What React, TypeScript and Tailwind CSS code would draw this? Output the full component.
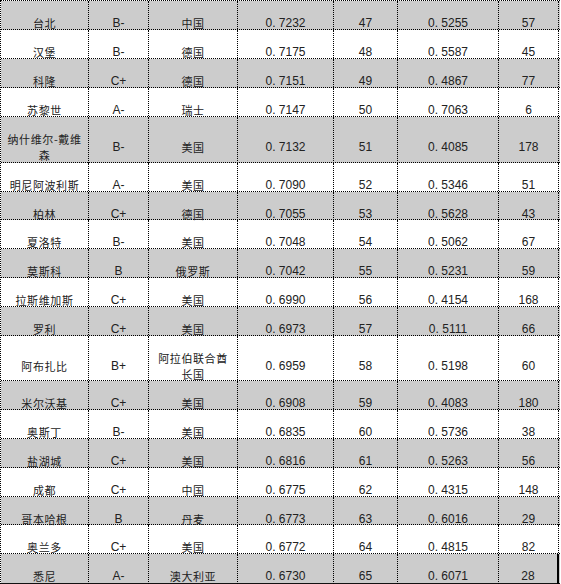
import React from "react";

type Row = [string, string, string, string, string, string, string];

const rows: Row[] = [
  ["台北", "B-", "中国", "0. 7232", "47", "0. 5255", "57"],
  ["汉堡", "B-", "德国", "0. 7175", "48", "0. 5587", "45"],
  ["科隆", "C+", "德国", "0. 7151", "49", "0. 4867", "77"],
  ["苏黎世", "A-", "瑞士", "0. 7147", "50", "0. 7063", "6"],
  ["纳什维尔-戴维\n森", "B-", "美国", "0. 7132", "51", "0. 4085", "178"],
  ["明尼阿波利斯", "A-", "美国", "0. 7090", "52", "0. 5346", "51"],
  ["柏林", "C+", "德国", "0. 7055", "53", "0. 5628", "43"],
  ["夏洛特", "B-", "美国", "0. 7048", "54", "0. 5062", "67"],
  ["莫斯科", "B", "俄罗斯", "0. 7042", "55", "0. 5231", "59"],
  ["拉斯维加斯", "C+", "美国", "0. 6990", "56", "0. 4154", "168"],
  ["罗利", "C+", "美国", "0. 6973", "57", "0. 5111", "66"],
  ["阿布扎比", "B+", "阿拉伯联合酋\n长国", "0. 6959", "58", "0. 5198", "60"],
  ["米尔沃基", "C+", "美国", "0. 6908", "59", "0. 4083", "180"],
  ["奥斯丁", "B-", "美国", "0. 6835", "60", "0. 5736", "38"],
  ["盐湖城", "C+", "美国", "0. 6816", "61", "0. 5263", "56"],
  ["成都", "C+", "中国", "0. 6775", "62", "0. 4315", "148"],
  ["哥本哈根", "B", "丹麦", "0. 6773", "63", "0. 6016", "29"],
  ["奥兰多", "C+", "美国", "0. 6772", "64", "0. 4815", "82"],
  ["悉尼", "A-", "澳大利亚", "0. 6730", "65", "0. 6071", "28"],
];

const heights = [29, 29, 29, 29, 46, 29, 28, 29, 29, 29, 29, 45, 29, 29, 29, 29, 28, 29, 30];

function Cell({ text, cjk, last, lastRow }: { text: string; cjk: boolean; last: boolean; lastRow: boolean }) {
  const lines = text.split("\n");
  return (
    <div
      className={
        "flex flex-col items-center justify-center pt-[14px] text-center leading-[16px] text-[#222222] " +
        (cjk
          ? "text-[11px] tracking-[0.6px] [font-family:'Noto_Sans_CJK_SC','Liberation_Sans',sans-serif] "
          : "text-[12px] [font-family:'Liberation_Sans','Noto_Sans_CJK_SC',sans-serif] ") +
        (last && lastRow ? "border-r-2 border-solid border-r-black" : "border-r border-dotted border-r-black")
      }
    >
      {lines.map((l, i) => (
        <span key={i} className="whitespace-nowrap">
          {l}
        </span>
      ))}
    </div>
  );
}

export default function App() {
  return (
    <div className="w-[561px] h-[584px] overflow-hidden bg-white">
      <div className="w-[560px] border-t border-l border-dotted border-black">
        {rows.map((r, i) => {
          const lastRow = i === rows.length - 1;
          return (
            <div
              key={i}
              style={{ height: heights[i] }}
              className={
                "grid grid-cols-[88px_60px_89px_96px_64px_101px_60px] " +
                (i % 2 === 0 ? "bg-[#cccccc] " : "bg-white ") +
                (lastRow ? "border-b border-solid border-b-[#111111]" : "border-b border-dotted border-b-black")
              }
            >
              {r.map((c, j) => (
                <Cell key={j} text={c} cjk={j === 0 || j === 2} last={j === 6} lastRow={lastRow} />
              ))}
            </div>
          );
        })}
      </div>
    </div>
  );
}
